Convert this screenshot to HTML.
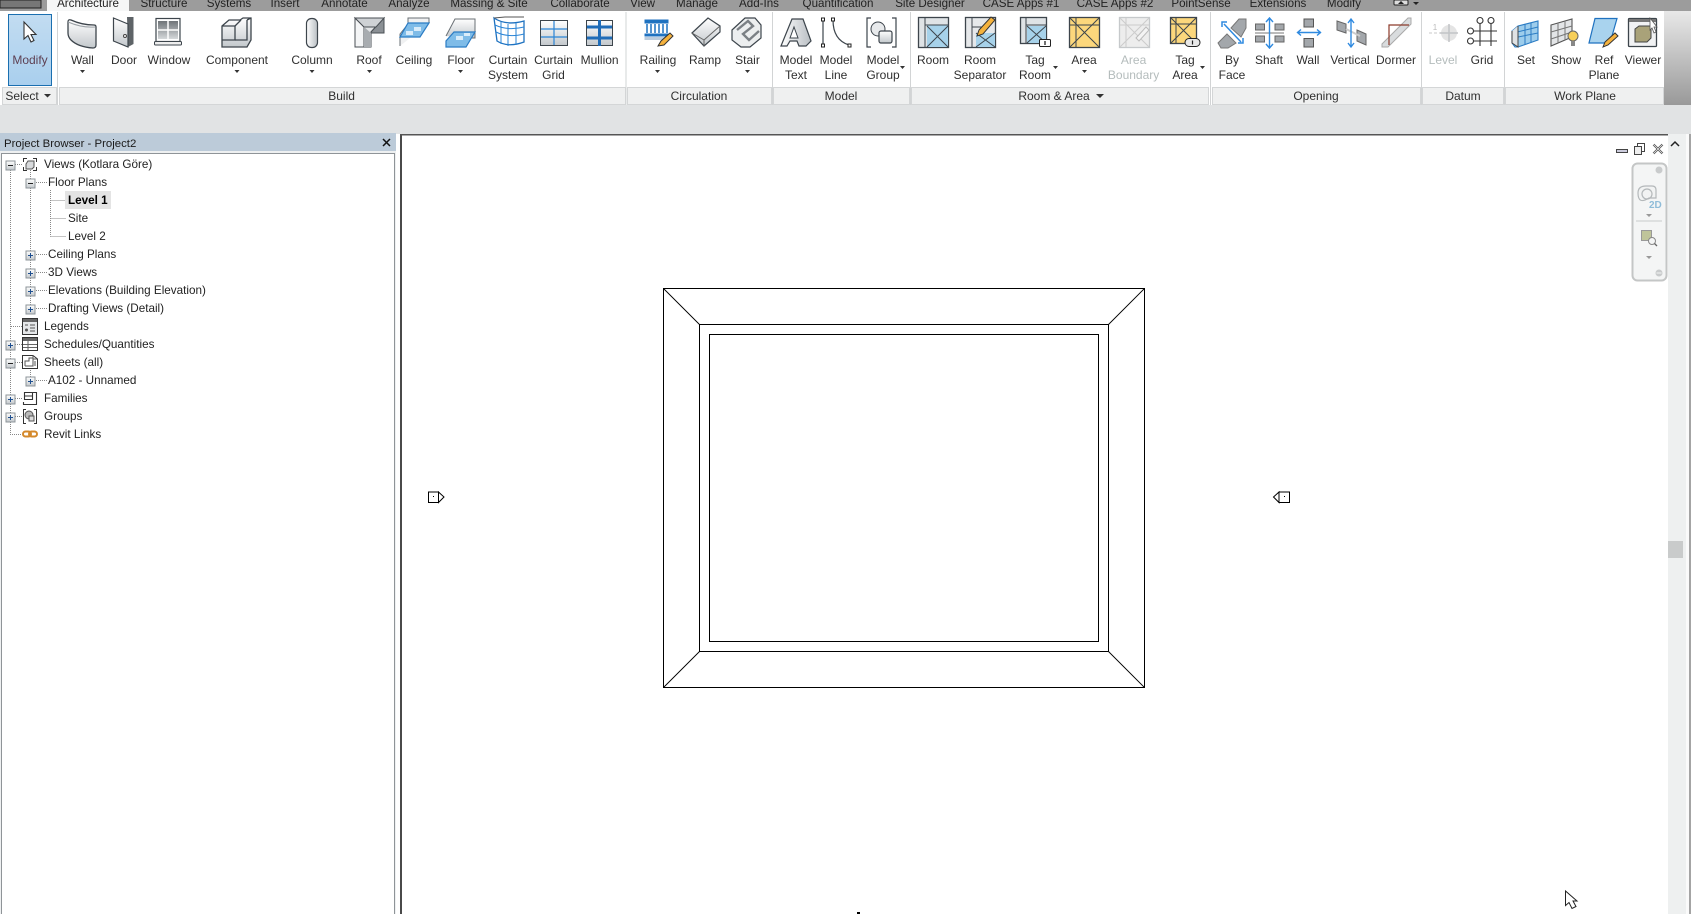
<!DOCTYPE html>
<html><head><meta charset="utf-8"><title>Revit</title>
<style>
html,body{margin:0;padding:0;background:#fff;width:1691px;height:914px;overflow:hidden}
svg{display:block;font-family:"Liberation Sans",sans-serif}
.t{font-size:12px;fill:#2f2f2f;text-anchor:middle}
.l{font-size:11.7px;fill:#222}
.d{fill:#b4bcbc}
.o{fill:none;stroke:#3d454c;stroke-width:1.3}
</style></head><body>
<svg width="1691" height="914" viewBox="0 0 1691 914" xmlns="http://www.w3.org/2000/svg">
<defs>
<linearGradient id="g" x1="0" y1="0" x2="0" y2="1"><stop offset="0" stop-color="#fff"/><stop offset="1" stop-color="#c3c8cc"/></linearGradient>
<linearGradient id="h" x1="0" y1="0" x2="1" y2="0"><stop offset="0" stop-color="#fff"/><stop offset="1" stop-color="#b9bec3"/></linearGradient>
<linearGradient id="m" x1="0" y1="0" x2="0" y2="1"><stop offset="0" stop-color="#c2dcf1"/><stop offset="1" stop-color="#a9cfee"/></linearGradient>
<linearGradient id="e" x1="0" y1="0" x2="0" y2="1"><stop offset="0" stop-color="#e8e8e8"/><stop offset="1" stop-color="#999"/></linearGradient>
<linearGradient id="w" x1="0" y1="0" x2="0" y2="1"><stop offset="0" stop-color="#6f7478"/><stop offset="1" stop-color="#d5d8da"/></linearGradient>
<g id="plus"><rect x="-4.5" y="-4.5" width="9" height="9" fill="url(#g)" stroke="#8d9499"/><path d="M-2.5 0H2.5M0-2.5V2.5" stroke="#1f4f8f" stroke-width="1"/></g>
<g id="minus"><rect x="-4.5" y="-4.5" width="9" height="9" fill="url(#g)" stroke="#8d9499"/><path d="M-2.5 0H2.5" stroke="#222" stroke-width="1"/></g>
</defs>

<!-- tab bar -->
<rect width="1691" height="11" fill="#9c9c9c"/>
<rect x="0" y="0" width="41" height="8" fill="#777" stroke="#222" stroke-width="1"/>
<rect x="47" y="0" width="82" height="12" fill="#f6f7f7"/>
<g font-size="11.6" text-anchor="middle" fill="#222">
<text x="88" y="7">Architecture</text><text x="164" y="7">Structure</text><text x="229" y="7">Systems</text><text x="285" y="7">Insert</text><text x="344.500" y="7">Annotate</text><text x="409" y="7">Analyze</text><text x="489" y="7">Massing &amp; Site</text><text x="580" y="7">Collaborate</text><text x="642.600" y="7">View</text><text x="697" y="7">Manage</text><text x="759" y="7">Add-Ins</text><text x="838" y="7">Quantification</text><text x="930" y="7">Site Designer</text><text x="1021" y="7">CASE Apps #1</text><text x="1115" y="7">CASE Apps #2</text><text x="1201" y="7">PointSense</text><text x="1278" y="7">Extensions</text><text x="1344" y="7">Modify</text>
</g>
<rect x="1394" y="0" width="14" height="5" rx="1" fill="#ddd" stroke="#222"/><path d="M1398 4l3-3 3 3z" fill="#222"/><path d="M1413 2h6l-3 3z" fill="#222"/>

<!-- ribbon -->
<rect x="0" y="11" width="1691" height="94" fill="#fff"/>
<rect x="1664" y="11" width="27" height="94" fill="url(#e)"/>
<rect x="0" y="105" width="1691" height="29" fill="#e1e3e4"/>
<g fill="#eff0f0" stroke="#d4d6d7">
<rect x="2.500" y="87.500" width="54" height="17"/><rect x="59.500" y="87.500" width="566" height="17"/><rect x="627.500" y="87.500" width="144" height="17"/><rect x="773.500" y="87.500" width="136" height="17"/><rect x="911.500" y="87.500" width="297" height="17"/><rect x="1212.500" y="87.500" width="208" height="17"/><rect x="1422.500" y="87.500" width="81" height="17"/><rect x="1505.500" y="87.500" width="158" height="17"/>
</g>
<path d="M57.500 12V105M626 12V105M772.500 12V105M910.500 12V105M1210.500 12V105M1421.500 12V105M1504.500 12V105" stroke="#d2d4d5" fill="none"/>
<g class="t">
<text class="t" x="22" y="100">Select</text><text class="t" x="341.600" y="100">Build</text><text class="t" x="699" y="100">Circulation</text><text class="t" x="841" y="100">Model</text><text class="t" x="1054" y="100">Room &amp; Area</text><text class="t" x="1316" y="100">Opening</text><text class="t" x="1463" y="100">Datum</text><text class="t" x="1585" y="100">Work Plane</text>
</g>
<path d="M44 94h7l-3.500 3.500zM1096 94h8l-4 4z" fill="#333"/>

<!-- Modify button -->
<rect x="8.500" y="14.500" width="43" height="71" fill="url(#m)" stroke="#1a6fb0"/>
<path d="M24 22V39L28 35.500 31 42 34 40.500 31 34.500H36Z" fill="#fff" stroke="#333" stroke-width="1.100"/>

<!-- labels -->
<text class="t" x="30" y="64" style="fill:#5d3f52">Modify</text>
<text class="t" x="82.400" y="64">Wall</text><text class="t" x="124" y="64">Door</text><text class="t" x="169" y="64">Window</text><text class="t" x="237" y="64">Component</text><text class="t" x="312" y="64">Column</text><text class="t" x="369" y="64">Roof</text><text class="t" x="414" y="64">Ceiling</text><text class="t" x="461" y="64">Floor</text>
<text class="t" x="508" y="64">Curtain</text><text class="t" x="508" y="79">System</text><text class="t" x="553.500" y="64">Curtain</text><text class="t" x="553.500" y="79">Grid</text><text class="t" x="599.600" y="64">Mullion</text>
<text class="t" x="658" y="64">Railing</text><text class="t" x="705" y="64">Ramp</text><text class="t" x="747.500" y="64">Stair</text>
<text class="t" x="796" y="64">Model</text><text class="t" x="796" y="79">Text</text><text class="t" x="836" y="64">Model</text><text class="t" x="836" y="79">Line</text><text class="t" x="883" y="64">Model</text><text class="t" x="883" y="79">Group</text>
<text class="t" x="933" y="64">Room</text><text class="t" x="980" y="64">Room</text><text class="t" x="980" y="79">Separator</text><text class="t" x="1035" y="64">Tag</text><text class="t" x="1035" y="79">Room</text><text class="t" x="1084" y="64">Area</text>
<text class="t d" x="1133.600" y="64">Area</text><text class="t d" x="1133.600" y="79">Boundary</text><text class="t" x="1185" y="64">Tag</text><text class="t" x="1185" y="79">Area</text>
<text class="t" x="1232" y="64">By</text><text class="t" x="1232" y="79">Face</text><text class="t" x="1269" y="64">Shaft</text><text class="t" x="1308" y="64">Wall</text><text class="t" x="1350" y="64">Vertical</text><text class="t" x="1396" y="64">Dormer</text>
<text class="t d" x="1443" y="64">Level</text><text class="t" x="1482" y="64">Grid</text><text class="t" x="1526" y="64">Set</text><text class="t" x="1566" y="64">Show</text><text class="t" x="1604" y="64">Ref</text><text class="t" x="1604" y="79">Plane</text><text class="t" x="1643" y="64">Viewer</text>

<!-- drop arrows -->
<g fill="#333"><path d="M80 70h5l-2.500 3zM234.500 70h5l-2.500 3zM309.500 70h5l-2.500 3zM367 70h5l-2.500 3zM458 70h5l-2.500 3zM655 70h5l-2.500 3zM745 70h5l-2.500 3zM1082 70h5l-2.500 3zM900 66h5l-2.500 3zM1053 66h5l-2.500 3zM1200 66h5l-2.500 3z"/></g>

<!-- Build icons -->
<path class="o" style="fill:url(#g)" d="M68 22Q68 19 71 20Q82 25 94 25Q96 25 96 27V45Q96 48 93 48Q78 47 71 40Q68 37 68 33Z"/>
<path d="M68 22Q82 28 95 27" fill="none" stroke="#9aa0a5"/>
<path d="M127 17H133.500V44L128 47Z" fill="#5e6367"/><path d="M113.500 18L128 24V47L113.500 41Z" fill="url(#g)" stroke="#3d454c" stroke-width="1.200"/><circle cx="125" cy="36" r="1.500" fill="#fff" stroke="#444"/>
<rect x="156" y="18.500" width="24" height="23" fill="#fff" stroke="#3d454c" stroke-width="1.200"/><rect x="158" y="21" width="20" height="18" fill="url(#w)"/><path d="M168 21V39M158 30H178" stroke="#fff" stroke-width="1.500"/><rect x="154.500" y="41.500" width="27" height="3.500" rx="1" fill="#eee" stroke="#3d454c"/>
<path class="o" style="fill:url(#g)" d="M222 26L229 20H240L243 18H251V40L247 47H222ZM222 26H235V40H222"/><path class="o" d="M235 26L241 20M235 40H247V20M247 20L251 18"/>
<rect x="306.500" y="18.500" width="11" height="29" rx="5" style="fill:url(#h)" stroke="#3d454c" stroke-width="1.200"/>
<path d="M355 18H384L371 32V47H355Z" fill="#e2e4e6" stroke="#4a4f54"/><path d="M384 18V33H371V32Z" fill="#8b9095" stroke="#4a4f54"/><path d="M355 18L364 27V47H355Z" fill="#f4f5f6" stroke="#4a4f54"/><path d="M364 27H376L384 18H355Z" fill="#cfd2d5" stroke="#4a4f54"/><path d="M364 27L371 33V47H364Z" fill="#a8acb0"/>
<path d="M400 46V34L408 24V18H429V23" fill="#f0f1f2" stroke="#6a7075"/><path d="M408 23H429L420 37H400Z" fill="#7fbce8" stroke="#2b7cc4" stroke-width="1.200"/><path d="M414 27h7v4h-7zM406 31h7v4h-7z" fill="#d9ecfa"/>
<path d="M446 36L455 19H475V38H464" fill="url(#g)" stroke="#6a7075"/><path d="M446 47V41L454 32H475L466 47Z" fill="#7fbce8" stroke="#2b7cc4" stroke-width="1.200"/><path d="M456 36h7v4h-7zM464 33h6v3h-6z" fill="#d9ecfa"/>
<path d="M494 18Q506 26 524 21V42Q508 48 497 41Z" fill="#fff" stroke="#1f72c0" stroke-width="1.300"/><path d="M501 22V44M508 24V46M516 23V45M495 25Q508 31 524 27M496 32Q508 38 524 34" fill="none" stroke="#2b85d6"/><path d="M494 18L505 17H524" fill="none" stroke="#555"/>
<rect x="540.500" y="20.500" width="27" height="25" fill="url(#g)" stroke="#3d454c"/><path d="M554 21V45M541 29H567M541 37H567" stroke="#2b85d6" stroke-width="1.200"/>
<rect x="586.500" y="20.500" width="26" height="25" fill="url(#g)" stroke="#3d454c"/><path d="M599.500 20V46M587 27H612M587 38H612" stroke="#1f6cb8" stroke-width="3"/>

<!-- Circulation -->
<rect x="644.500" y="19.500" width="24" height="4" fill="#1f72c0"/><path d="M647 24V33M651 24V33M655 24V33M659 24V33M663 24V33M667 24V33" stroke="#1f72c0" stroke-width="1.500"/><rect x="644.500" y="33.500" width="24" height="3" fill="#1f72c0"/><rect x="644.500" y="37" width="24" height="3" fill="#bcd"/>
<path d="M658 46L661 41 670 33 673 36 664 45Z" fill="#f5b23d" stroke="#333"/>
<path d="M692 33L708 18 720 26V32L704 46Z" fill="url(#g)" stroke="#3d454c" stroke-width="1.200"/><path d="M704 46V40L692 33M704 40L720 26" fill="none" stroke="#666"/>
<path d="M732 30L745 18H755L761 25V38L750 47H741L732 40Z" fill="#eceeef" stroke="#3d454c" stroke-width="1.200"/><path d="M737 30L748 21 753 26 743 34 749 40 759 31" fill="none" stroke="#7b8085" stroke-width="2.400"/>

<!-- Model -->
<path d="M781 46L792 19H803L811 41 806 46H799L797 41H790L787 46Z" fill="url(#h)" stroke="#3d454c" stroke-width="1.200"/><path d="M790 38L794 27 798 38Z" fill="#fff" stroke="#3d454c"/>
<path d="M823 20V45M833 20Q833 40 849 45" fill="none" stroke="#3d454c" stroke-width="1.200"/><g fill="#fff" stroke="#222"><rect x="821.500" y="18" width="3" height="3"/><rect x="821.500" y="44" width="3" height="3"/><rect x="831.500" y="18" width="3" height="3"/><rect x="848" y="44" width="3" height="3"/></g>
<path d="M871 18H867V47H871M892 18H896V47H892" fill="none" stroke="#3d454c" stroke-width="1.200"/><circle cx="878" cy="29" r="7" fill="#e8eaec" stroke="#3d454c"/><rect x="879" y="31" width="13" height="12" rx="2" style="fill:url(#g)" stroke="#3d454c" stroke-width="1.200"/>

<!-- Room & Area -->
<rect x="918.500" y="17.500" width="30" height="30" fill="#dfe3e6" stroke="#3d454c" stroke-width="1.300"/><path d="M925 25H948" stroke="#3d454c"/><rect x="927" y="25.500" width="21" height="21.500" fill="#a7d2ea"/><path d="M925 18V47M927 26L948 47M948 26L927 47" stroke="#3d454c" fill="none"/>
<rect x="965.500" y="17.500" width="30" height="30" fill="#e6e8ea" stroke="#3d454c" stroke-width="1.300"/><rect x="976" y="33" width="19" height="14" fill="#a7d2ea"/><path d="M972 18V47M976 33L995 47M995 33L976 47M972 27H985" stroke="#3d454c" fill="none"/>
<path d="M977 36L979 30 991 17 995 20 983 34Z" fill="#f5b23d" stroke="#333"/>
<rect x="1020.500" y="17.500" width="26" height="26" fill="#dfe3e6" stroke="#3d454c" stroke-width="1.300"/><rect x="1027" y="26" width="19" height="17" fill="#a7d2ea"/><path d="M1026 18V43M1027 26L1046 43M1046 26L1027 43M1026 25H1046" stroke="#3d454c" fill="none"/><rect x="1039.500" y="39.500" width="11" height="7" rx="1" fill="#fff" stroke="#222"/><path d="M1045 41V45" stroke="#222" stroke-width="1.300"/>
<rect x="1069.500" y="17.500" width="30" height="30" fill="#fcd77c" stroke="#3d454c" stroke-width="1.300"/><path d="M1070 18L1099 47M1099 18L1070 47M1076 18V47M1070 25H1099" stroke="#3d454c" fill="none"/>
<rect x="1119.500" y="17.500" width="30" height="30" fill="#ededed" stroke="#c6c9cb" stroke-width="1.300"/><path d="M1120 18L1149 47M1149 18L1120 47M1126 18V47M1120 25H1149" stroke="#ccc" fill="none"/><path d="M1136 38L1146 27 1149 30 1139 41Z" fill="#f4f4f4" stroke="#bbb"/>
<rect x="1170.500" y="17.500" width="26" height="26" fill="#fcd77c" stroke="#3d454c" stroke-width="1.300"/><path d="M1171 18L1196 43M1196 18L1171 43M1176 18V43M1171 24H1196" stroke="#3d454c" fill="none"/><rect x="1185" y="38.500" width="15" height="8" rx="4" fill="#e8e8e8" stroke="#222"/><path d="M1192.500 40.500V44.500" stroke="#222" stroke-width="1.200"/>

<!-- Opening -->
<path d="M1218 43L1227 34 1236 43 1228 48H1221ZM1231 28L1239 19H1246V28L1241 37Z" fill="#a3a7ab" stroke="#777"/><path d="M1224 24L1241 42" stroke="#2f8ae0" stroke-width="1.500"/><path d="M1222 27V22H1227M1238 43H1243V38" fill="none" stroke="#2f8ae0" stroke-width="1.500"/>
<g fill="#a3a7ab" stroke="#666"><rect x="1255.500" y="24" width="9" height="6"/><rect x="1275" y="24" width="9" height="6"/><rect x="1255.500" y="36" width="9" height="6"/><rect x="1275" y="36" width="9" height="6"/></g><path d="M1255 33H1284" stroke="#bbb" stroke-width="2"/><path d="M1269.500 19V47M1266 22L1269.500 18 1273 22M1266 44L1269.500 48 1273 44" fill="none" stroke="#2f8ae0" stroke-width="1.400"/>
<g fill="#a3a7ab" stroke="#555"><rect x="1304" y="19" width="9.500" height="8"/><rect x="1304" y="38.500" width="9.500" height="8.500"/></g><path d="M1298 32.500H1321M1301 29.500L1297.500 32.500 1301 35.500M1317 29.500L1320.500 32.500 1317 35.500" fill="none" stroke="#2f8ae0" stroke-width="1.400"/>
<path d="M1337 21L1346 24V33L1337 30ZM1357 30L1366 34V45L1357 41Z" fill="#a3a7ab" stroke="#666"/><path d="M1346 29L1360 36" stroke="#ccc" stroke-width="2"/><path d="M1351 20V46M1348 23L1351 19 1354 23M1348 43L1351 47 1354 43" fill="none" stroke="#2f8ae0" stroke-width="1.400"/>
<path d="M1382 44L1408 18H1411V24L1388 47H1382Z" fill="#d9dcde" stroke="#aaa"/><path d="M1389 45V25H1409" fill="none" stroke="#8c3a2a" stroke-width="1.200"/>

<!-- Datum -->
<circle cx="1449" cy="33" r="8" fill="#e4e4e4"/><path d="M1449 24V42M1440 33H1458" stroke="#c2c4c6" stroke-width="1.500"/><path d="M1429 33H1440" stroke="#c8c8c8" stroke-dasharray="3 2"/><text x="1435" y="30" font-size="8" fill="#bbb" text-anchor="middle">1</text>
<path d="M1480 24V46M1491 24V46M1474 31H1497M1474 41H1497" stroke="#333" stroke-width="1.100"/><g fill="#fff" stroke="#333" stroke-width="1.100"><circle cx="1480" cy="20.500" r="3"/><circle cx="1491" cy="20.500" r="3"/><circle cx="1470.500" cy="31" r="3"/><circle cx="1470.500" cy="41" r="3"/></g>

<!-- Work plane -->
<path d="M1512 31L1518 26 1538 21V40L1518 47H1515L1512 43Z" fill="#9dcdec" stroke="#2b7cc4" stroke-width="1.100"/><path d="M1518 26V47M1525 24V45M1531 23V43M1513 33L1538 27M1513 38L1538 33" stroke="#2b7cc4" fill="none"/><path d="M1512 31V43L1518 47V26" fill="#dfe2e4" stroke="#444"/>
<path d="M1551 25L1572 19V37L1551 46Z" fill="#e3e5e7" stroke="#555" stroke-width="1.100"/><path d="M1558 23V43M1565 21V40M1551 32L1572 26M1551 39L1572 32" stroke="#777" fill="none"/><circle cx="1573" cy="36" r="5" fill="#f7cf59" stroke="#666"/><rect x="1571" y="41" width="4" height="5" fill="#888"/>
<path d="M1595 18.500H1617L1610 43H1589Z" fill="#a9d3ee" stroke="#1f72c0" stroke-width="1.200"/><path d="M1603 47L1605 42 1615 33 1618 36 1608 45Z" fill="#f5b23d" stroke="#333"/>
<rect x="1628.500" y="18.500" width="28" height="28" rx="1" fill="#f1f2f3" stroke="#3d454c" stroke-width="1.300"/><rect x="1629" y="19" width="27" height="3" fill="#777"/><path d="M1635 29L1639 26H1651V38L1647 42H1635Z" fill="#a9a279" stroke="#444"/><path d="M1650 18V30L1652 28 1654 33 1656 32 1654 27H1657Z" fill="#fff" stroke="#555" stroke-width=".8"/>

<!-- project browser -->
<rect x="0" y="133" width="396" height="18" fill="#bccbd9"/>
<text x="4" y="147" font-size="11.4" fill="#1a1a1a">Project Browser - Project2</text>
<path d="M383 139L390 146M390 139L383 146" stroke="#111" stroke-width="1.500"/>
<rect x="0" y="151" width="396" height="763" fill="#eef0f1"/>
<rect x="1.500" y="153.500" width="393" height="761" fill="#fff" stroke="#8f9498"/>
<!-- tree lines -->
<g stroke="#888" stroke-dasharray="1 1" fill="none">
<path d="M10.500 170V434.500H22M30.500 170V308M50.500 190V236.500M50.500 200.500H66M50.500 218.500H66M50.500 236.500H66M36 182.500H47M36 254.500H47M36 272.500H47M36 290.500H47M36 308.500H47M15 164.500H22M11 326.500H22M15 344.500H22M15 362.500H22M30.500 368V380M36 380.500H47M15 398.500H22M15 416.500H22M30.500 164V176"/>
</g>
<use href="#minus" x="10.500" y="165.500"/><use href="#minus" x="30.500" y="183.500"/><use href="#plus" x="30.500" y="255.500"/><use href="#plus" x="30.500" y="273.500"/><use href="#plus" x="30.500" y="291.500"/><use href="#plus" x="30.500" y="309.500"/><use href="#plus" x="10.500" y="345.500"/><use href="#minus" x="10.500" y="363.500"/><use href="#plus" x="30.500" y="381.500"/><use href="#plus" x="10.500" y="399.500"/><use href="#plus" x="10.500" y="417.500"/>
<rect x="65" y="191" width="46" height="18" fill="#e4e4e4"/>
<g class="l">
<text class="l" x="44" y="168">Views (Kotlara Göre)</text>
<text class="l" x="48" y="186">Floor Plans</text>
<text class="l" x="68" y="204" font-weight="bold" style="fill:#000">Level 1</text>
<text class="l" x="68" y="222">Site</text>
<text class="l" x="68" y="240">Level 2</text>
<text class="l" x="48" y="258">Ceiling Plans</text>
<text class="l" x="48" y="276">3D Views</text>
<text class="l" x="48" y="294">Elevations (Building Elevation)</text>
<text class="l" x="48" y="312">Drafting Views (Detail)</text>
<text class="l" x="44" y="330">Legends</text>
<text class="l" x="44" y="348">Schedules/Quantities</text>
<text class="l" x="44" y="366">Sheets (all)</text>
<text class="l" x="48" y="384">A102 - Unnamed</text>
<text class="l" x="44" y="402">Families</text>
<text class="l" x="44" y="420">Groups</text>
<text class="l" x="44" y="438">Revit Links</text>
</g>
<!-- tree icons -->
<path d="M27 158.500H23.500V162M33 158.500H36.500V162M23.500 167V170.500H27M36.500 167V170.500H33" fill="none" stroke="#333"/><path d="M26 164L28 161H34V167L32 169H26Z" fill="#d8dadc" stroke="#555"/>
<rect x="22.500" y="318.500" width="15" height="16" fill="#e5e7e9" stroke="#333"/><rect x="23" y="319" width="14" height="3" fill="#666"/><path d="M25 325h3M30 325h5M30 328h5M30 331h5" stroke="#555"/><circle cx="26.500" cy="330" r="1.500" fill="#555"/>
<rect x="22.500" y="337.500" width="15" height="13" fill="#fff" stroke="#333"/><rect x="23" y="338" width="14" height="3" fill="#666"/><path d="M23 344.500H37M23 347.500H37M28 341V350" stroke="#666" fill="none"/>
<path d="M22.500 355.500H33L37.500 359V368.500H22.500Z" fill="#fff" stroke="#333"/><path d="M25 366V361H29V358H33V366H25M33 355.500V359H37.500M35 361V366" fill="none" stroke="#555"/>
<path d="M24.500 392.500H32.500V399.500H24.500ZM32.500 392.500H36.500V404.500H23.500V402M24.500 396H32.500" fill="none" stroke="#333" stroke-width="1.100"/>
<path d="M26 409.500H23.500V423.500H26M34 409.500H36.500V423.500H34" fill="none" stroke="#333"/><circle cx="29" cy="415" r="4" fill="#bbb" stroke="#555"/><rect x="29" y="416" width="5" height="5" fill="#ddd" stroke="#555"/>
<g fill="none" stroke="#d4892b" stroke-width="2"><rect x="23" y="431.500" width="8" height="5" rx="2.500"/><rect x="29" y="431.500" width="8" height="5" rx="2.500"/></g>

<!-- canvas -->
<rect x="400" y="134" width="1268" height="780" fill="#fff"/>
<rect x="400" y="134" width="2" height="780" fill="#4a4a4a"/>
<rect x="400" y="134" width="1268" height="1.500" fill="#555"/>
<rect x="1668" y="134" width="23" height="780" fill="#eef0f0"/>
<rect x="1686" y="134" width="3" height="780" fill="#fafafa"/>
<rect x="1689" y="134" width="2" height="780" fill="#a4a4a4"/>
<rect x="1668" y="541" width="15" height="17" fill="#c9cbcb"/>
<path d="M1671 146L1675 142 1679 146" fill="none" stroke="#222" stroke-width="1.500"/>
<!-- view controls -->
<rect x="1616.500" y="149.500" width="11" height="3" fill="#ccd" stroke="#444"/>
<rect x="1637.500" y="143.500" width="7" height="8" fill="none" stroke="#444"/><rect x="1634.500" y="146.500" width="7" height="8" fill="#eee" stroke="#444"/>
<path d="M1653.500 144.500L1662.500 153.500M1662.500 144.500L1653.500 153.500" stroke="#444" stroke-width="2.200"/><path d="M1653.500 144.500L1662.500 153.500M1662.500 144.500L1653.500 153.500" stroke="#eee" stroke-width=".8"/>
<!-- nav bar -->
<rect x="1632.500" y="163.500" width="34" height="117" rx="5" fill="#f4f5f5" stroke="#c4c6c6" stroke-width="2"/>
<circle cx="1659" cy="170" r="3.500" fill="#c9cbcc"/><circle cx="1659" cy="273" r="3.500" fill="#c9cbcc"/><path d="M1656.500 273h5" stroke="#f4f5f5"/>
<path d="M1646 186H1652Q1656 186 1656 190V198H1649Q1638 205 1638 193Q1638 186 1646 186Z" fill="#f2f3f3" stroke="#b4b8ba" stroke-width="1.200"/><circle cx="1647" cy="194" r="5" fill="none" stroke="#b4b8ba" stroke-width="1.200"/><text x="1649" y="208" font-size="10" font-weight="bold" fill="#8fbcd8">2D</text>
<path d="M1646 214h6l-3 3z" fill="#999"/><path d="M1636 221H1662" stroke="#c8caca"/>
<rect x="1641.500" y="230.500" width="10" height="10" fill="#bfc49a" stroke="#999"/><circle cx="1652" cy="241" r="3.500" fill="#f4f5f5" stroke="#888"/><path d="M1654.500 243.500L1657 246" stroke="#666" stroke-width="1.300"/>
<path d="M1646 256h6l-3 3z" fill="#999"/>
<!-- drawing -->
<g fill="none" stroke="#000" stroke-width="1">
<rect x="663.500" y="288.500" width="481" height="399"/>
<rect x="699.500" y="324.500" width="409" height="327"/>
<rect x="709.500" y="334.500" width="389" height="307"/>
</g>
<path d="M664 289L700 325M1144 289L1108 325M664 687L700 651M1144 687L1108 651" stroke="#000" stroke-width=".9" fill="none"/>
<!-- elevation markers -->
<g fill="#fff" stroke="#000" stroke-width="1">
<path d="M438.500 492L444 497 438.500 502.500Z"/><rect x="428.500" y="492" width="10" height="10.500"/>
<path d="M1279 492L1273.500 497 1279 502.500Z"/><rect x="1279" y="492" width="10.500" height="10.500"/>
</g>
<rect x="433" y="496" width="1" height="1" fill="#000"/><rect x="1284" y="496" width="1" height="1" fill="#000"/>
<rect x="857" y="912" width="3" height="2" fill="#000"/>
<!-- cursor -->
<path d="M1565.500 891V905.500L1569 902.500 1572 908.500 1576 906.500 1573 901H1577Z" fill="#fff" stroke="#222" stroke-width="1"/>
</svg>
</body></html>
